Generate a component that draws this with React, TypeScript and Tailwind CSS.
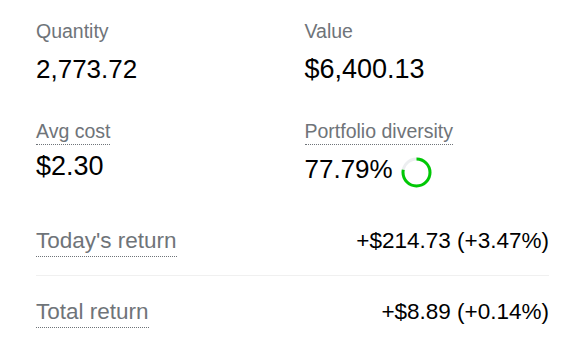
import React from "react";

function Donut({ pct }: { pct: number }) {
  const r = 13.5;
  const c = 2 * Math.PI * r;
  return (
    <svg width="31" height="31" viewBox="0 0 31 31" className="mt-[7px] shrink-0">
      <circle cx="15.5" cy="15.5" r={r} fill="none" stroke="#eceef0" strokeWidth="3" />
      <circle
        cx="15.5"
        cy="15.5"
        r={r}
        fill="none"
        stroke="#00c805"
        strokeWidth="3"
        strokeDasharray={`${(c * pct) / 100} ${c}`}
        transform="rotate(-90 15.5 15.5)"
      />
    </svg>
  );
}

export default function App() {
  return (
    <div className="w-[585px] h-[346px] bg-white px-9 pt-5 font-['Liberation_Sans',Arial,sans-serif] text-black overflow-hidden">
      <div className="grid grid-cols-2 gap-x-6">
        <div>
          <div className="text-[19.5px] leading-[22px] text-[#6f7479]">Quantity</div>
          <div className="mt-[11px] text-[26px] leading-[32px]">2,773.72</div>
        </div>
        <div>
          <div className="text-[19.5px] leading-[22px] text-[#6f7479]">Value</div>
          <div className="mt-[11px] text-[27px] leading-[32px]">$6,400.13</div>
        </div>
        <div className="mt-[35px]">
          <span className="inline-block text-[19.5px] leading-[22px] text-[#6f7479] pb-[2px] border-b border-dotted border-[#6f7479]">
            Avg cost
          </span>
          <div className="mt-[5px] text-[27px] leading-[32px]">$2.30</div>
        </div>
        <div className="mt-[35px]">
          <span className="inline-block text-[19.5px] leading-[22px] text-[#6f7479] pb-[2px] border-b border-dotted border-[#6f7479]">
            Portfolio diversity
          </span>
          <div className="mt-[5px] flex items-center gap-[8px]">
            <span className="text-[26px] leading-[32px]">77.79%</span>
            <Donut pct={77.79} />
          </div>
        </div>
      </div>
      <div className="mt-[17px]">
        <div className="flex items-baseline justify-between pt-[23px] pb-[18px] border-b border-[#f0f0f0]">
          <span className="inline-block text-[22.5px] leading-[26px] text-[#6f7479] pb-[2px] border-b border-dotted border-[#6f7479]">
            Today's return
          </span>
          <span className="text-[22.5px] leading-[26px]">+$214.73 (+3.47%)</span>
        </div>
        <div className="flex items-baseline justify-between pt-[23px] pb-[18px] border-b border-[#f0f0f0]">
          <span className="inline-block text-[22.5px] leading-[26px] text-[#6f7479] pb-[2px] border-b border-dotted border-[#6f7479]">
            Total return
          </span>
          <span className="text-[22.5px] leading-[26px]">+$8.89 (+0.14%)</span>
        </div>
      </div>
    </div>
  );
}
